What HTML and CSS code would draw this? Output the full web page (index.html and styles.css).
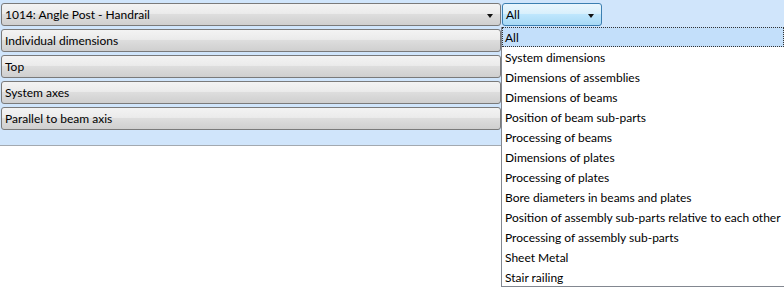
FILE: index.html
```html
<!DOCTYPE html>
<html lang="en">

<head>
    <meta charset="UTF-8">
    <title>Dimension settings</title>
    <link rel="stylesheet" href="styles.css">
</head>

<body>
    <div id="panel">
        <div class="row">
            <div class="combo wide">
                <span>1014: Angle Post - Handrail</span>
                <i class="arrow"></i>
            </div>
            <div class="combo small open">
                <span>All</span>
                <i class="arrow"></i>
            </div>
        </div>
        <div class="combo wide"><span>Individual dimensions</span></div>
        <div class="combo wide"><span>Top</span></div>
        <div class="combo wide"><span>System axes</span></div>
        <div class="combo wide"><span>Parallel to beam axis</span></div>

        <ul id="list">
            <li class="sel">All</li>
            <li>System dimensions</li>
            <li>Dimensions of assemblies</li>
            <li>Dimensions of beams</li>
            <li>Position of beam sub-parts</li>
            <li>Processing of beams</li>
            <li>Dimensions of plates</li>
            <li>Processing of plates</li>
            <li>Bore diameters in beams and plates</li>
            <li>Position of assembly sub-parts relative to each other</li>
            <li>Processing of assembly sub-parts</li>
            <li>Sheet Metal</li>
            <li>Stair railing</li>
        </ul>
    </div>
</body>

</html>
```

FILE: styles.css
```css
* {
    margin: 0;
    padding: 0;
    box-sizing: border-box;
}

body {
    font-family: "Lato", "Open Sans", sans-serif;
    font-size: 12px;
    color: #000;
    background: #fff;
    width: 784px;
    height: 288px;
    overflow: hidden;
}

#panel {
    position: relative;
    height: 146px;
    background-color: #d0e5fb;
    border-bottom: 1px solid #a3a9b0;
    padding: 3px 1px;
    display: flex;
    flex-direction: column;
    gap: 3px;
}

.row {
    display: flex;
    gap: 1px;
}

.combo {
    height: 23px;
    border: 1px solid #7a7a7a;
    border-radius: 3px;
    background: linear-gradient(#f3f3f3 0%, #ebebeb 45%, #dddddd 50%, #cfcfcf 100%);
    display: flex;
    align-items: center;
    padding: 1px 3px 0;
    position: relative;
    line-height: 1;
}

.combo.wide {
    width: 500px;
}

.combo.small {
    width: 100px;
    border-color: #3c7fb1;
    background: linear-gradient(#eaf6fd 0%, #d9f0fc 45%, #bee6fd 50%, #a7d9f5 100%);
}

.arrow {
    position: absolute;
    right: 7px;
    top: 10px;
    width: 0;
    height: 0;
    border-left: 3.5px solid transparent;
    border-right: 3.5px solid transparent;
    border-top: 4px solid #111;
}

#list {
    position: absolute;
    left: 501px;
    top: 27px;
    width: 290px;
    height: 260px;
    list-style: none;
    background: #fff;
    border: 1px solid #828790;
    border-right: none;
    border-top: none;
}

#list li {
    height: 20px;
    line-height: 20px;
    padding: 1px 0 0 3px;
    white-space: nowrap;
}

#list li.sel {
    background-color: #c3dffa;
    outline: 1px dotted #333;
    outline-offset: -1px;
    width: 282px;
}
```
